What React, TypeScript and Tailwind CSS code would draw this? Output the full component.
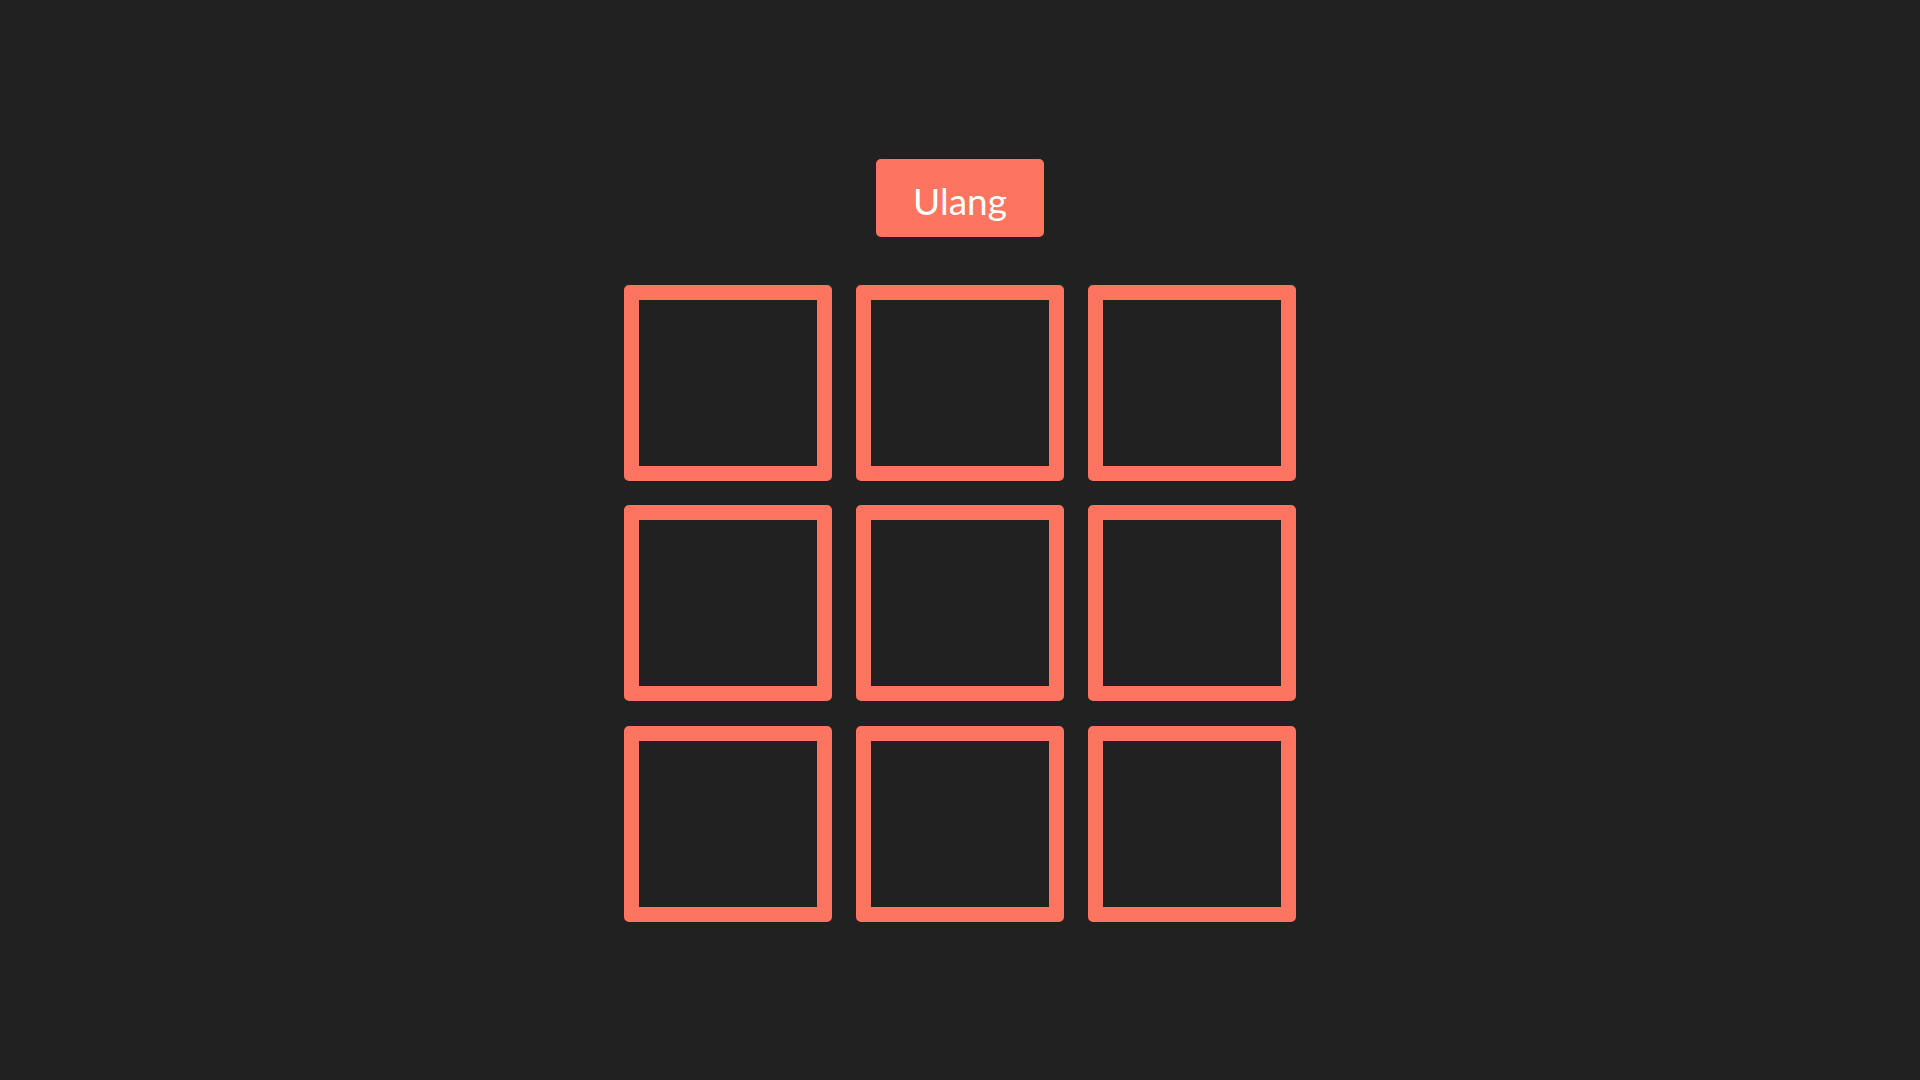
export default function App() {
  const cells = Array.from({ length: 9 }, (_, i) => i);

  return (
    <div className="min-h-screen w-full bg-[#212121] flex flex-col items-center justify-center gap-12 font-['Lato',sans-serif]">
      <button className="w-[168px] h-[78px] pt-[5px] rounded-[5px] bg-[#fd7460] text-white text-[37px] leading-none flex items-center justify-center">
        Ulang
      </button>

      <div className="grid grid-cols-[repeat(3,208px)] grid-rows-[repeat(3,196px)] gap-x-6 gap-y-[24.5px]">
        {cells.map((i) => (
          <div key={i} className="border-[15px] border-[#fd7460] rounded-[5px]" />
        ))}
      </div>
    </div>
  );
}
